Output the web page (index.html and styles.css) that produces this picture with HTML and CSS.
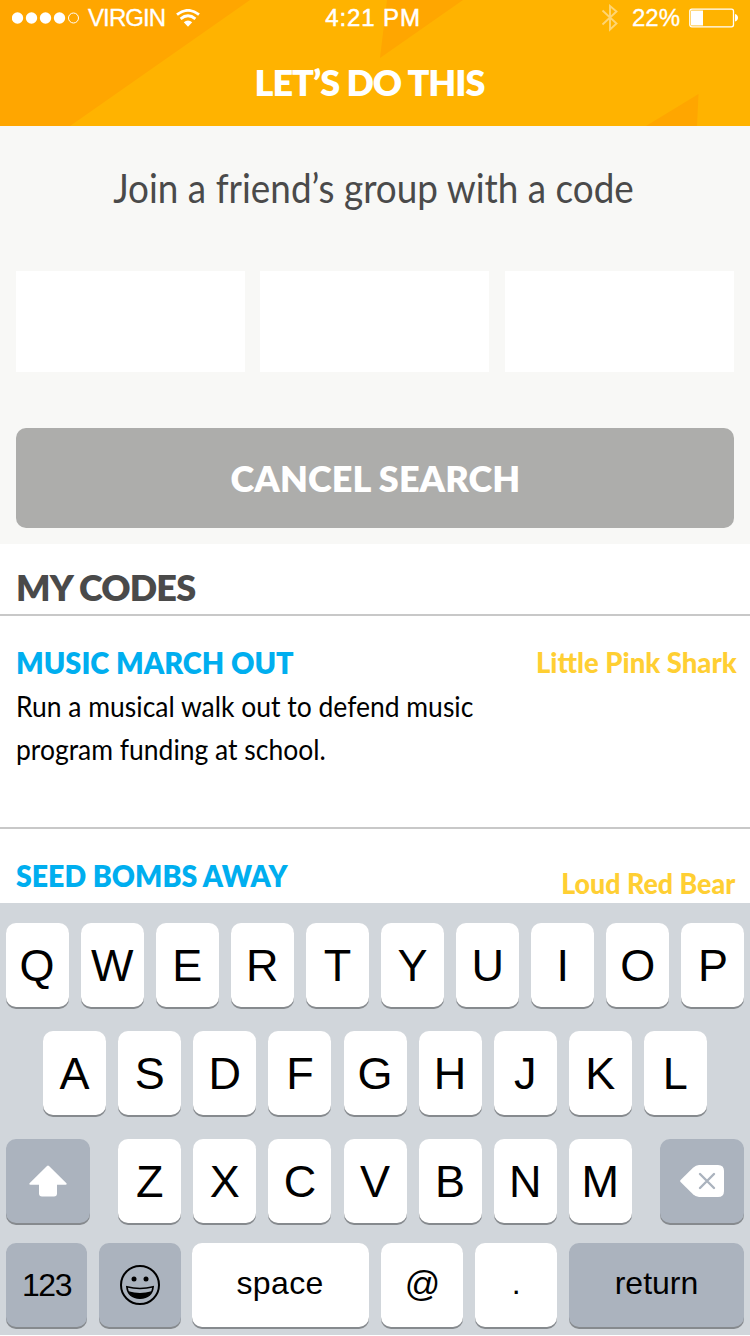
FILE: index.html
```
<!DOCTYPE html>
<html lang="en">
<head>
<meta charset="utf-8">
<title>Let’s Do This</title>
<link rel="stylesheet" href="styles.css">
</head>
<body>
<div class="screen">
  <header class="header">
    <svg class="header-art" width="750" height="126" viewBox="0 0 750 126" aria-hidden="true">
      <path d="M0 0H250L70 126H0ZM387 0H463L380 58ZM646 126L698.500 94L697 126Z"/>
    </svg>
    <div class="status">
      <div class="status-left">
        <svg width="68" height="12" viewBox="0 0 68 12" fill="#fff"><circle cx="5.500" cy="6" r="5.700"/><circle cx="19.500" cy="6" r="5.700"/><circle cx="33.500" cy="6" r="5.700"/><circle cx="47.500" cy="6" r="5.700"/><circle cx="61.500" cy="6" r="5" fill="none" stroke="#fff"/></svg>
        <span class="carrier">VIRGIN</span>
        <svg class="wifi" width="24" height="18" viewBox="0 0 24 18"><path d="M1 5.700Q12-3 23 5.700M4.600 9.800Q12 3.800 19.400 9.800" fill="none" stroke="#fff" stroke-width="2.800"/><path d="M7.800 13.300Q12 9.700 16.200 13.300L12 17.800Z" fill="#fff"/></svg>
      </div>
      <span class="clock">4:21 PM</span>
      <div class="status-right">
        <svg width="18" height="28" viewBox="0 0 18 28"><path d="M1.500 6.500L15.500 19.500L9 25.500V2L15.500 7.500L1.500 20.500" fill="none" stroke="#fff" stroke-opacity=".45" stroke-width="1.900"/></svg>
        <span class="percent">22%</span>
        <svg class="battery" width="50" height="20" viewBox="0 0 50 20"><rect x=".8" y="1.200" width="43.700" height="17.600" rx="2" fill="none" stroke="#fff" stroke-width="1.300"/><path d="M2 2.500H14V17.500H2ZM46 6Q49 7 49 9.800T46 13.500Z" fill="#fff"/></svg>
      </div>
    </div>
    <h1 class="title">LET’S DO THIS</h1>
  </header>

  <section class="join">
    <h2 class="prompt">Join a friend’s group with a code</h2>
    <div class="code-fields">
      <input class="code-field" aria-label="First word">
      <input class="code-field" aria-label="Second word">
      <input class="code-field" aria-label="Third word">
    </div>
    <button class="cancel">CANCEL SEARCH</button>
  </section>

  <main class="codes">
    <h2 class="codes-title">MY CODES</h2>
    <article class="entry">
      <div class="entry-text">
        <h3 class="entry-name">MUSIC MARCH OUT</h3>
        <p class="entry-desc">Run a musical walk out to defend music<br>program funding at school.</p>
      </div>
      <span class="phrase">Little Pink Shark</span>
    </article>
    <article class="entry entry-cut">
      <h3 class="entry-name">SEED BOMBS AWAY</h3>
      <span class="phrase">Loud Red Bear</span>
    </article>
  </main>

  <div class="keyboard">
    <div class="row">
      <span class="key">Q</span><span class="key">W</span><span class="key">E</span><span class="key">R</span><span class="key">T</span><span class="key">Y</span><span class="key">U</span><span class="key">I</span><span class="key">O</span><span class="key">P</span>
    </div>
    <div class="row">
      <span class="key">A</span><span class="key">S</span><span class="key">D</span><span class="key">F</span><span class="key">G</span><span class="key">H</span><span class="key">J</span><span class="key">K</span><span class="key">L</span>
    </div>
    <div class="row row-third">
      <span class="key dark wide"><svg width="38" height="32" viewBox="0 0 38 32" fill="#fff"><path d="M18 .9Q19 0 20 .9L37.200 18Q38.500 19.600 36.500 19.800H28V28.500Q28 31.500 25 31.500H13Q10 31.500 10 28.500V19.800H1.500Q-.5 19.600 .8 18Z"/></svg></span>
      <div class="row"><span class="key">Z</span><span class="key">X</span><span class="key">C</span><span class="key">V</span><span class="key">B</span><span class="key">N</span><span class="key">M</span></div>
      <span class="key dark wide"><svg width="44" height="32" viewBox="0 0 44 32"><path d="M.6 17Q-.4 16 .6 15L13 2.800Q16 0 19 0H38Q44 0 44 6V26Q44 32 38 32H19Q16 32 13 29.200Z" fill="#fff"/><path d="M20 9L34 23M34 9L20 23" stroke="#abb3be" stroke-width="2.400" stroke-linecap="round"/></svg></span>
    </div>
    <div class="row row-last">
      <span class="key dark small digits">123</span>
      <span class="key dark emoji"><svg width="40" height="40" viewBox="0 0 40 40"><circle cx="20" cy="20" r="19" fill="none" stroke="#000" stroke-width="2"/><circle cx="14" cy="14" r="2.500"/><circle cx="26" cy="14" r="2.500"/><path d="M6.800 21.700Q20 25.300 33.200 21.700Q32 33 20 33.200Q8 33 6.800 21.700Z" fill="none" stroke="#000" stroke-width="1.500"/><path d="M8.500 26.300Q20 29.500 31.500 26.300Q28.500 33.200 20 33.200T8.500 26.300Z"/></svg></span>
      <span class="key small space">space</span>
      <span class="key at">@</span>
      <span class="key small">.</span>
      <span class="key dark small">return</span>
    </div>
  </div>
</div>
</body>
</html>
```
FILE: styles.css
```
* { box-sizing: border-box; }
body { margin: 0; background: #fff; font-family: Lato, sans-serif; }
h1, h2, h3, p { margin: 0; font-weight: 700; white-space: nowrap; }
svg { display: block; flex: none; }
.screen { width: 750px; height: 1336px; overflow: hidden; display: flex; flex-direction: column; }

.header { position: relative; height: 126px; flex: none; background: #ffb300; color: #fff; }
.header-art { position: absolute; inset: 0; fill: #ffa600; }
.status { position: relative; height: 36px; padding: 0 11px 0 12px; display: grid; grid-template-columns: 1fr auto 1fr; align-items: center; font: 24px/36px "Liberation Sans", Arial, sans-serif; }
.status-left, .status-right { display: flex; align-items: center; }
.status-right { justify-content: flex-end; }
.carrier { margin-left: 8px; width: 78px; letter-spacing: -.9px; -webkit-text-stroke: .3px #fff; }
.wifi { margin-left: 10px; }
.clock { letter-spacing: .9px; -webkit-text-stroke: .5px #fff; padding-right: 5px; }
.percent { margin: 0 9px 0 13px; -webkit-text-stroke: .3px #fff; }
.title { position: relative; padding: 22px 11px 0 0; text-align: center; font-size: 36px; line-height: 48px; font-weight: 800; letter-spacing: -1px; }

.join { height: 418px; flex: none; padding: 36px 16px 16px; background: #f8f8f6; display: flex; flex-direction: column; }
.prompt { height: 109px; font-weight: 400; font-size: 40px; line-height: 52px; text-align: center; color: #4a4a4a; transform: translateX(-1.5px) scaleX(.922); }
.code-fields { display: grid; grid-template-columns: 229px 229px 229px; column-gap: 15.450px; }
.code-field { width: 100%; height: 101px; border: 0; border-radius: 0; background: #fff; padding: 0 16px; font: 36px Lato, sans-serif; }
.cancel { margin-top: auto; height: 100px; border: 0; border-radius: 10px; background: #adadab; color: #fff; font: 800 36px Lato, sans-serif; letter-spacing: .1px; padding: 0 0 0 1px; }

.codes { height: 359px; flex: none; overflow: hidden; }
.codes-title { height: 72px; padding: 20px 16px 0; border-bottom: 2px solid #c8c8c8; font-size: 36px; line-height: 46px; font-weight: 800; color: #4a4a4a; letter-spacing: -.8px; }
.entry { height: 213px; padding: 25px 13px 0 16px; border-bottom: 2px solid #c8c8c8; display: flex; justify-content: space-between; align-items: flex-start; }
.entry-name { color: #00aeef; font-size: 30px; line-height: 42px; font-weight: 800; transform: scaleX(.963); transform-origin: left; }
.entry-desc { padding-top: 1px; font-size: 29px; line-height: 43px; font-weight: 400; transform: scaleX(.913); transform-origin: left; }
.phrase { color: #ffcf33; font-size: 29px; line-height: 42px; font-weight: 900; white-space: nowrap; transform: scaleX(.948); transform-origin: right; }
.entry-cut .entry-name { transform: scaleX(.95); }
.entry-cut .phrase { margin-top: 8px; margin-right: 2px; transform: scaleX(.925); }

.keyboard { height: 432px; flex: none; padding: 20px 6px 0; background: #d1d6db; display: flex; flex-direction: column; gap: 24px; font-family: "Liberation Sans", Arial, sans-serif; }
.row { display: flex; justify-content: center; gap: 12.100px; }
.row-third { justify-content: space-between; }
.key { width: 63px; height: 84px; flex: none; border-radius: 10px; background: #fff; box-shadow: 0 2px 0 #868a8e; display: flex; align-items: center; justify-content: center; font-size: 45px; color: #000; padding-top: 1px; }
.dark { background: #abb3be; }
.wide { width: 84px; padding-top: 0; }
.row-last { margin-top: -4px; display: grid; grid-template-columns: 81px 82px 177px 82px 82px 175px; column-gap: 11.800px; justify-content: start; }
.row-last .key { width: auto; }
.row-last .small { font-size: 32px; padding: 0 0 3px; }
.row-last .space { margin-left: -1px; margin-right: 1px; letter-spacing: .4px; }
.row-last .digits { padding: 0; letter-spacing: -1.500px; }
.row-last .at { font-size: 35px; padding: 0 0 2px; }
.row-last .emoji { padding: 0; }
```
